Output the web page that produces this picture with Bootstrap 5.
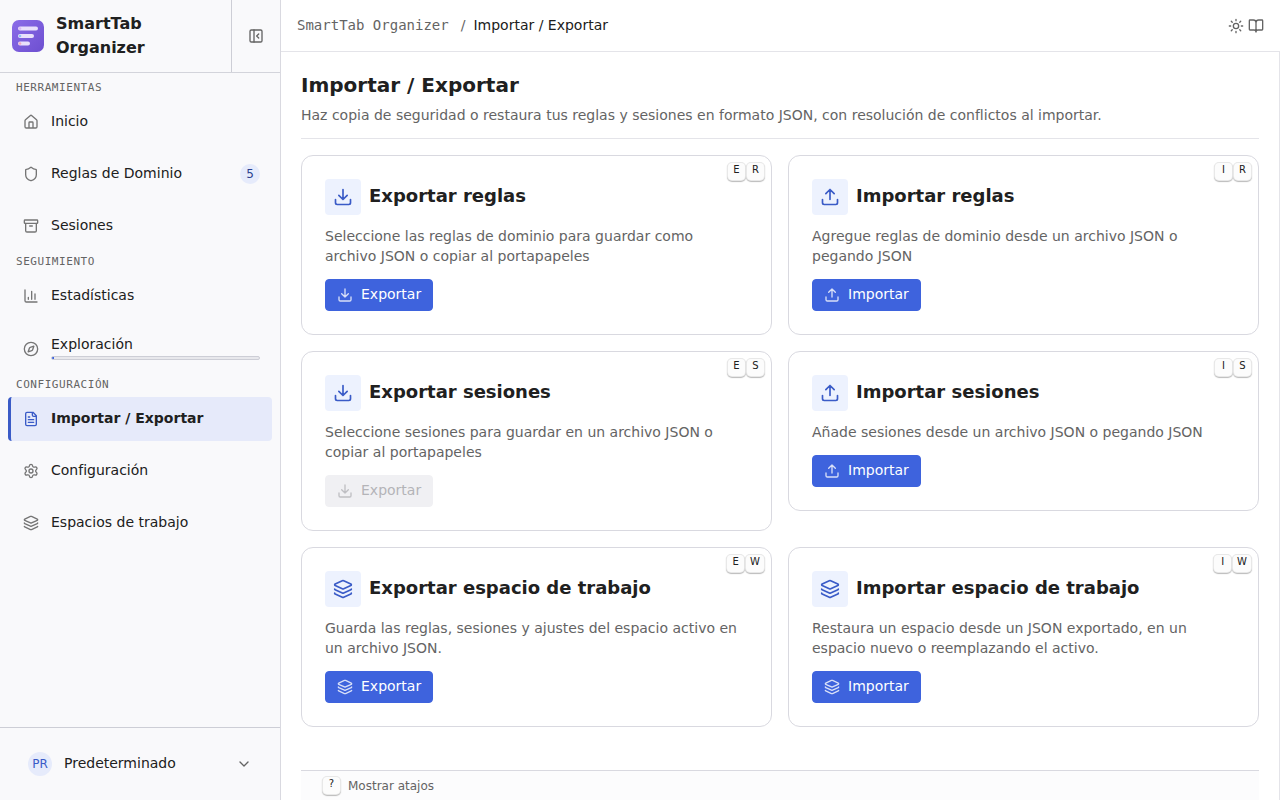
<!DOCTYPE html>
<html lang="es">
<head>
<meta charset="utf-8">
<meta name="viewport" content="width=device-width, initial-scale=1">
<title>SmartTab Organizer – Importar / Exportar</title>
<link href="https://cdn.jsdelivr.net/npm/bootstrap@5.3.0/dist/css/bootstrap.min.css" rel="stylesheet">
<style>
  :root { --ink: #202020; --muted: #646464; --line: #d9d9e0; --accent: #3e63dd; --accent-deep: #3a5bc7; --accent-soft: #edf2fe; }
  body { font-family: "DejaVu Sans", Verdana, sans-serif; font-size: 14px; line-height: 20px; color: var(--ink); background: #fff; }
  .mono { font-family: "DejaVu Sans Mono", monospace; }
  .ico { width: 16px; height: 16px; flex: none; fill: none; stroke: currentColor; stroke-width: 2; stroke-linecap: round; stroke-linejoin: round; }
  .ico-lg { width: 20px; height: 20px; }
  .plain-btn { border: 0; background: none; padding: 0; color: var(--muted); display: flex; align-items: center; justify-content: center; }

  .sidebar { flex: 0 0 281px; background: #f9f9fb; border-right: 1px solid var(--line); position: sticky; top: 0; }
  .brand-bar { border-bottom: 1px solid #d3d4db; }
  .brand-name { font-size: 16px; line-height: 24px; font-weight: 700; }
  .collapse-cell { flex: 0 0 49px; border-left: 1px solid #cdced6; }
  .side-nav { padding: 1px 8px; }
  .side-label { height: 26px; padding: 6px 8px 0; font-size: 11px; line-height: 16px; letter-spacing: .05em; font-weight: 400; color: var(--muted); margin: 0; text-transform: uppercase; }
  .side-item { display: flex; align-items: center; gap: 12px; min-height: 44px; padding: 0 12px; border-left: 3px solid transparent; border-radius: 4px; color: var(--ink); text-decoration: none; }
  .side-item .ico { color: #757575; }
  .side-item .item-text { padding-bottom: 2px; }
  .side-item.active { background: #e6eafa; border-left-color: var(--accent-deep); font-weight: 700; }
  .side-item.active .ico { color: var(--accent-deep); }
  .side-item.with-steps { min-height: 45px; }
  .count { width: 20px; height: 20px; border-radius: 50%; background: #e6ebfb; color: #2b3f8f; font-size: 12px; text-align: center; }
  .steps { height: 4px; background: #e8e8ec; border: 1px solid #cdced6; border-radius: 4px; overflow: hidden; }
  .steps span { background: var(--accent); }
  .user-bar { border-top: 1px solid #cdced6; height: 73px; }
  .user-bar .user-name { color: var(--ink); padding-bottom: 2px; }
  .avatar { width: 24px; height: 24px; line-height: 24px; border-radius: 50%; background: #e6ebfb; color: var(--accent-deep); font-size: 12px; text-align: center; }

  .topbar { height: 51px; padding: 0 16px; }
  .crumbs { padding-bottom: 2px; }
  .crumbs a { color: var(--muted); text-decoration: none; }
  .content { border-top: 1px solid #e4e4e9; border-right: 1px solid #e4e4e9; padding: 0 20px; }
  .page-head { padding: 19px 0 13px; border-bottom: 1px solid #e4e4e9; margin-bottom: 16px; }
  .page-head h1 { font-size: 20px; line-height: 28px; font-weight: 700; margin: 0 0 6px; }
  .soft { color: var(--muted); }
  .tile { border: 1px solid var(--line); border-radius: 12px; padding: 23px; gap: 12px; }
  .tile h2 { font-size: 18px; line-height: 26px; font-weight: 700; margin: 0; padding-bottom: 2px; }
  .tile p { margin: -1px 0 1px; }
  .tile-icon { width: 36px; height: 36px; border-radius: 4px; background: var(--accent-soft); color: var(--accent-deep); }
  .keys { position: absolute; top: 7px; right: 7px; display: flex; gap: 2px; }
  .key { display: inline-block; min-width: 17px; height: 17px; padding: 0 4px; font: 10px/14px "DejaVu Sans", sans-serif; text-align: center; color: var(--ink); background: #fcfcfc; border-radius: 4px; box-shadow: 0 0 0 1px #e8e8e8, 0 1px 1px 1px #bbbbbb; }
  .act { --bs-btn-bg: #3e63dd; --bs-btn-border-color: #3e63dd; --bs-btn-hover-bg: #3a5bc7; --bs-btn-hover-border-color: #3a5bc7; height: 32px; padding: 0 11px; gap: 8px; font-size: 14px; line-height: 20px; border-radius: 4px; }
  .act span { padding-bottom: 2px; }
  .act .ico { opacity: .8; }
  .act:disabled { background: #f0f0f3; border-color: #f0f0f3; color: #b4b4b8; opacity: 1; }
  .hints { position: sticky; bottom: 0; height: 30px; padding: 0 22px; gap: 8px; font-size: 12px; border-top: 1px solid var(--line); background: #fcfcfd; }
</style>
</head>
<body>
<svg class="d-none" aria-hidden="true">
  <symbol id="i-home" viewBox="0 0 24 24"><path d="M15 21v-8a1 1 0 0 0-1-1h-4a1 1 0 0 0-1 1v8M3 10a2 2 0 0 1 .709-1.528l7-5.999a2 2 0 0 1 2.582 0l7 5.999A2 2 0 0 1 21 10v9a2 2 0 0 1-2 2H5a2 2 0 0 1-2-2z"/></symbol>
  <symbol id="i-shield" viewBox="0 0 24 24"><path d="M20 13c0 5-3.5 7.5-7.66 8.95a1 1 0 0 1-.67-.01C7.5 20.5 4 18 4 13V6a1 1 0 0 1 1-1c2 0 4.5-1.2 6.24-2.72a1.17 1.17 0 0 1 1.52 0C14.51 3.81 17 5 19 5a1 1 0 0 1 1 1z"/></symbol>
  <symbol id="i-archive" viewBox="0 0 24 24"><rect width="20" height="5" x="2" y="3" rx="1"/><path d="M4 8v11a2 2 0 0 0 2 2h12a2 2 0 0 0 2-2V8M10 12h4"/></symbol>
  <symbol id="i-chart" viewBox="0 0 24 24"><path d="M3 3v16a2 2 0 0 0 2 2h16M18 17V9M13 17V5M8 17v-3"/></symbol>
  <symbol id="i-compass" viewBox="0 0 24 24"><circle cx="12" cy="12" r="10"/><path d="m16.24 7.76-1.804 5.411a2 2 0 0 1-1.265 1.265L7.76 16.24l1.804-5.411a2 2 0 0 1 1.265-1.265z"/></symbol>
  <symbol id="i-file" viewBox="0 0 24 24"><path d="M15 2H6a2 2 0 0 0-2 2v16a2 2 0 0 0 2 2h12a2 2 0 0 0 2-2V7zM14 2v4a2 2 0 0 0 2 2h4M10 9H8M16 13H8M16 17H8"/></symbol>
  <symbol id="i-gear" viewBox="0 0 24 24"><path d="M9.671 4.136a2.34 2.34 0 0 1 4.659 0 2.34 2.34 0 0 0 3.319 1.915 2.34 2.34 0 0 1 2.33 4.033 2.34 2.34 0 0 0 0 3.831 2.34 2.34 0 0 1-2.33 4.033 2.34 2.34 0 0 0-3.319 1.915 2.34 2.34 0 0 1-4.659 0 2.34 2.34 0 0 0-3.32-1.915 2.34 2.34 0 0 1-2.33-4.033 2.34 2.34 0 0 0 0-3.831A2.34 2.34 0 0 1 6.35 6.051a2.34 2.34 0 0 0 3.319-1.915"/><circle cx="12" cy="12" r="3"/></symbol>
  <symbol id="i-layers" viewBox="0 0 24 24"><path d="M12.83 2.18a2 2 0 0 0-1.66 0L2.6 6.08a1 1 0 0 0 0 1.83l8.58 3.91a2 2 0 0 0 1.66 0l8.58-3.9a1 1 0 0 0 0-1.83zM2 12a1 1 0 0 0 .58.91l8.6 3.91a2 2 0 0 0 1.65 0l8.58-3.9A1 1 0 0 0 22 12M2 17a1 1 0 0 0 .58.91l8.6 3.91a2 2 0 0 0 1.65 0l8.58-3.9A1 1 0 0 0 22 17"/></symbol>
  <symbol id="i-down" viewBox="0 0 24 24"><path d="M12 15V3M21 15v4a2 2 0 0 1-2 2H5a2 2 0 0 1-2-2v-4M7 10l5 5 5-5"/></symbol>
  <symbol id="i-up" viewBox="0 0 24 24"><path d="M12 3v12M21 15v4a2 2 0 0 1-2 2H5a2 2 0 0 1-2-2v-4M17 8l-5-5-5 5"/></symbol>
  <symbol id="i-panel" viewBox="0 0 24 24"><rect width="18" height="18" x="3" y="3" rx="2"/><path d="M9 3v18M16 15l-3-3 3-3"/></symbol>
  <symbol id="i-sun" viewBox="0 0 24 24"><circle cx="12" cy="12" r="4"/><path d="M12 2v2M12 20v2M4.93 4.93l1.41 1.41M17.66 17.66l1.41 1.41M2 12h2M20 12h2M6.34 17.66l-1.41 1.41M19.07 4.93l-1.41 1.41"/></symbol>
  <symbol id="i-book" viewBox="0 0 24 24"><path d="M12 7v14M3 18a1 1 0 0 1-1-1V4a1 1 0 0 1 1-1h5a4 4 0 0 1 4 4 4 4 0 0 1 4-4h5a1 1 0 0 1 1 1v13a1 1 0 0 1-1 1h-6a3 3 0 0 0-3 3 3 3 0 0 0-3-3z"/></symbol>
  <symbol id="i-chevron" viewBox="0 0 24 24"><path d="m6 9 6 6 6-6"/></symbol>
</svg>

<div class="d-flex align-items-start min-vh-100">
  <aside class="sidebar d-flex flex-column vh-100">
    <div class="brand-bar d-flex align-items-stretch">
      <div class="d-flex align-items-center flex-grow-1 px-2">
        <svg class="ms-1 flex-shrink-0" width="32" height="32" viewBox="0 0 32 32" role="img" aria-label="SmartTab Organizer">
          <defs><linearGradient id="lg" x1="0" y1="0" x2="1" y2="1"><stop offset="0" stop-color="#8b6ce8"/><stop offset="1" stop-color="#6d4fd0"/></linearGradient></defs>
          <rect width="32" height="32" rx="7" fill="url(#lg)"/>
          <g fill="#e9e0fb"><rect x="6" y="6.500" width="20" height="4" rx="2"/><rect x="6" y="14" width="16" height="4" rx="2"/><rect x="6" y="21.500" width="12" height="4" rx="2"/></g>
          <circle cx="8" cy="8.500" r="1.300" fill="#d9b8f5"/><circle cx="8" cy="16" r="1.300" fill="#8fc4f5"/><circle cx="8" cy="23.500" r="1.300" fill="#f3a8c0"/>
        </svg>
        <div class="brand-name ms-2 ps-1 py-2 my-1">SmartTab Organizer</div>
      </div>
      <div class="collapse-cell d-flex align-items-center justify-content-center">
        <button class="plain-btn" type="button" aria-label="Contraer barra lateral"><svg class="ico"><use href="#i-panel"/></svg></button>
      </div>
    </div>

    <nav class="side-nav flex-grow-1 overflow-auto">
      <h2 class="side-label mono">Herramientas</h2>
      <div class="d-flex flex-column gap-2">
        <a class="side-item" href="#"><svg class="ico"><use href="#i-home"/></svg><span class="item-text">Inicio</span></a>
        <a class="side-item" href="#"><svg class="ico"><use href="#i-shield"/></svg><span class="item-text">Reglas de Dominio</span><span class="count ms-auto">5</span></a>
        <a class="side-item" href="#"><svg class="ico"><use href="#i-archive"/></svg><span class="item-text">Sesiones</span></a>
      </div>
      <h2 class="side-label mono">Seguimiento</h2>
      <div class="d-flex flex-column gap-2">
        <a class="side-item" href="#"><svg class="ico"><use href="#i-chart"/></svg><span class="item-text">Estadísticas</span></a>
        <a class="side-item with-steps" href="#"><svg class="ico"><use href="#i-compass"/></svg>
          <span class="flex-grow-1 d-block pb-1"><span class="item-text d-block">Exploración</span><span class="steps d-flex" role="progressbar" aria-label="Exploración" aria-valuenow="1" aria-valuemin="0" aria-valuemax="100"><span style="width:1%"></span></span></span></a>
      </div>
      <h2 class="side-label mono">Configuración</h2>
      <div class="d-flex flex-column gap-2">
        <a class="side-item active" href="#" aria-current="page"><svg class="ico"><use href="#i-file"/></svg><span class="item-text">Importar / Exportar</span></a>
        <a class="side-item" href="#"><svg class="ico"><use href="#i-gear"/></svg><span class="item-text">Configuración</span></a>
        <a class="side-item" href="#"><svg class="ico"><use href="#i-layers"/></svg><span class="item-text">Espacios de trabajo</span></a>
      </div>
    </nav>

    <div class="user-bar d-flex align-items-center px-3">
      <button class="plain-btn w-100 px-2 mx-1" type="button">
        <span class="avatar">PR</span><span class="user-name ms-2 ps-1">Predeterminado</span><svg class="ico ms-auto"><use href="#i-chevron"/></svg>
      </button>
    </div>
  </aside>

  <div class="flex-grow-1 d-flex flex-column min-vh-100">
    <header class="topbar d-flex align-items-center justify-content-between">
      <nav class="crumbs d-flex gap-2" aria-label="Ruta">
        <a class="mono me-1" href="#">SmartTab Organizer</a><span class="soft">/</span><span aria-current="page">Importar / Exportar</span>
      </nav>
      <div class="d-flex gap-1">
        <button class="plain-btn" type="button" aria-label="Tema"><svg class="ico"><use href="#i-sun"/></svg></button>
        <button class="plain-btn" type="button" aria-label="Documentación"><svg class="ico"><use href="#i-book"/></svg></button>
      </div>
    </header>

    <main class="content flex-grow-1 d-flex flex-column">
      <div class="page-head">
        <h1>Importar / Exportar</h1>
        <p class="soft m-0">Haz copia de seguridad o restaura tus reglas y sesiones en formato JSON, con resolución de conflictos al importar.</p>
      </div>
      <div class="row row-cols-2 g-3 align-items-start mb-4">
        <div class="col"><section class="tile position-relative d-flex flex-column align-items-start">
          <div class="keys"><kbd class="key">E</kbd><kbd class="key">R</kbd></div>
          <div class="d-flex align-items-center gap-2"><span class="tile-icon d-flex align-items-center justify-content-center"><svg class="ico ico-lg"><use href="#i-down"/></svg></span><h2>Exportar reglas</h2></div>
          <p class="soft">Seleccione las reglas de dominio para guardar como archivo JSON o copiar al portapapeles</p>
          <button class="act btn btn-primary d-flex align-items-center" type="button"><svg class="ico"><use href="#i-down"/></svg><span>Exportar</span></button>
        </section></div>
        <div class="col"><section class="tile position-relative d-flex flex-column align-items-start">
          <div class="keys"><kbd class="key">I</kbd><kbd class="key">R</kbd></div>
          <div class="d-flex align-items-center gap-2"><span class="tile-icon d-flex align-items-center justify-content-center"><svg class="ico ico-lg"><use href="#i-up"/></svg></span><h2>Importar reglas</h2></div>
          <p class="soft">Agregue reglas de dominio desde un archivo JSON o pegando JSON</p>
          <button class="act btn btn-primary d-flex align-items-center" type="button"><svg class="ico"><use href="#i-up"/></svg><span>Importar</span></button>
        </section></div>
        <div class="col"><section class="tile position-relative d-flex flex-column align-items-start">
          <div class="keys"><kbd class="key">E</kbd><kbd class="key">S</kbd></div>
          <div class="d-flex align-items-center gap-2"><span class="tile-icon d-flex align-items-center justify-content-center"><svg class="ico ico-lg"><use href="#i-down"/></svg></span><h2>Exportar sesiones</h2></div>
          <p class="soft">Seleccione sesiones para guardar en un archivo JSON o copiar al portapapeles</p>
          <button class="act btn btn-primary d-flex align-items-center" type="button" disabled><svg class="ico"><use href="#i-down"/></svg><span>Exportar</span></button>
        </section></div>
        <div class="col"><section class="tile position-relative d-flex flex-column align-items-start">
          <div class="keys"><kbd class="key">I</kbd><kbd class="key">S</kbd></div>
          <div class="d-flex align-items-center gap-2"><span class="tile-icon d-flex align-items-center justify-content-center"><svg class="ico ico-lg"><use href="#i-up"/></svg></span><h2>Importar sesiones</h2></div>
          <p class="soft">Añade sesiones desde un archivo JSON o pegando JSON</p>
          <button class="act btn btn-primary d-flex align-items-center" type="button"><svg class="ico"><use href="#i-up"/></svg><span>Importar</span></button>
        </section></div>
        <div class="col"><section class="tile position-relative d-flex flex-column align-items-start">
          <div class="keys"><kbd class="key">E</kbd><kbd class="key">W</kbd></div>
          <div class="d-flex align-items-center gap-2"><span class="tile-icon d-flex align-items-center justify-content-center"><svg class="ico ico-lg"><use href="#i-layers"/></svg></span><h2>Exportar espacio de trabajo</h2></div>
          <p class="soft">Guarda las reglas, sesiones y ajustes del espacio activo en un archivo JSON.</p>
          <button class="act btn btn-primary d-flex align-items-center" type="button"><svg class="ico"><use href="#i-layers"/></svg><span>Exportar</span></button>
        </section></div>
        <div class="col"><section class="tile position-relative d-flex flex-column align-items-start">
          <div class="keys"><kbd class="key">I</kbd><kbd class="key">W</kbd></div>
          <div class="d-flex align-items-center gap-2"><span class="tile-icon d-flex align-items-center justify-content-center"><svg class="ico ico-lg"><use href="#i-layers"/></svg></span><h2>Importar espacio de trabajo</h2></div>
          <p class="soft">Restaura un espacio desde un JSON exportado, en un espacio nuevo o reemplazando el activo.</p>
          <button class="act btn btn-primary d-flex align-items-center" type="button"><svg class="ico"><use href="#i-layers"/></svg><span>Importar</span></button>
        </section></div>
      </div>
      <footer class="hints soft d-flex align-items-center mt-auto"><kbd class="key">?</kbd><span>Mostrar atajos</span></footer>
    </main>
  </div>
</div>
<script src="https://cdn.jsdelivr.net/npm/bootstrap@5.3.0/dist/js/bootstrap.bundle.min.js"></script>
</body>
</html>
